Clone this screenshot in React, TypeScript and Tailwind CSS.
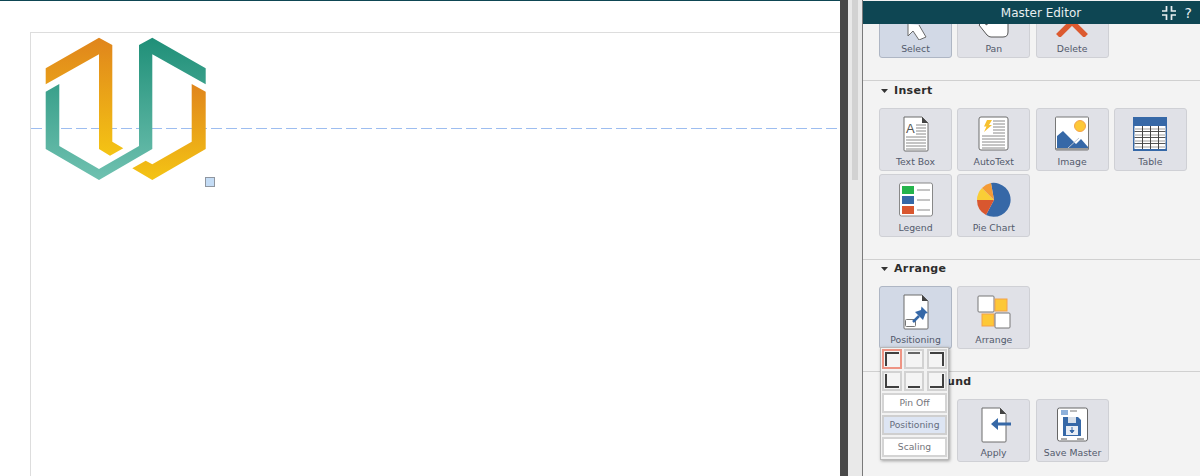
const font = "font-['DejaVu_Sans',Verdana,sans-serif]";

function Btn({ label, active, children }: { label: string; active?: boolean; children: React.ReactNode }) {
  return (
    <div
      className={`relative w-[73px] h-[63px] shrink-0 rounded-[3px] border flex flex-col items-center justify-end pb-[2px] ${
        active ? "bg-[#d2d9e6] border-[#aeb6c4]" : "bg-[#e0e1e7] border-[#cfd0d5]"
      }`}
    >
      <div className="flex-1 flex items-end justify-center pb-[3px]">{children}</div>
      <span className="text-[9.3px] leading-[13px] text-[#535a6c]">{label}</span>
    </div>
  );
}

function Doc({ w = 26, h = 36, children }: { w?: number; h?: number; children?: React.ReactNode }) {
  return (
    <svg width={w} height={h} viewBox={`0 0 ${w} ${h}`} className="overflow-visible">
      <path d={`M1 1H${w - 7}L${w - 1} 7V${h - 2}Q${w - 1} ${h - 1} ${w - 2} ${h - 1}H2Q1 ${h - 1} 1 ${h - 2}Z`} fill="#fff" stroke="#6d6d6d" />
      <path d={`M${w - 7} 1L${w - 1} 7H${w - 7}Z`} fill="#444" />
      {children}
    </svg>
  );
}

const Lines = ({ x, x2, ys }: { x: number; x2: number; ys: number[] }) => (
  <>
    {ys.map((y) => (
      <line key={y} x1={x} x2={x2} y1={y} y2={y} stroke="#8a8a8a" strokeWidth="1" />
    ))}
  </>
);

function SectionHead({ label }: { label: string }) {
  return (
    <div className="flex items-center h-[18px] pl-[18px] gap-[6px]">
      <svg width="7" height="4" viewBox="0 0 7 4"><path d="M0 0H7L3.5 4Z" fill="#333" /></svg>
      <span className="text-[11px] font-bold tracking-[0.35px] text-[#2c2c2c]">{label}</span>
    </div>
  );
}

function Logo() {
  return (
    <svg width="162" height="144" viewBox="45 37 162 144" className="block">
      <defs>
        <linearGradient id="or" x1="0" y1="0" x2="0" y2="1">
          <stop offset="0" stopColor="#e0851c" />
          <stop offset="1" stopColor="#f4c414" />
        </linearGradient>
        <linearGradient id="tl" x1="0" y1="0" x2="0" y2="1">
          <stop offset="0" stopColor="#1f8f78" />
          <stop offset="1" stopColor="#6fc1b0" />
        </linearGradient>
      </defs>
      <path d="M45.700 68.300L99 37.700L112.300 45V141.700L123.300 148.300L110 155.700L99 149V54.300L45.700 84.300Z" fill="url(#or)" />
      <path d="M45.700 91.700L59.300 84V146L99 169L139 146V45L152.300 37.700L205.700 68.300V84.300L152.300 54.300V149L99 180L45.700 149Z" fill="url(#tl)" />
      <path d="M191.700 84L205.700 91.700V149L152.300 180L132.300 168.300L145.700 160.700L152.300 164.300L191.700 141.700Z" fill="url(#or)" />
    </svg>
  );
}

function Pin({ active, d, lines, light }: { active?: boolean; d: string; lines: string; light?: boolean }) {
  return (
    <div className={`w-[20px] h-[20px] border-2 bg-[#f4f4f4] ${active ? "border-[#ee9484]" : "border-[#d2d2d2]"}`}>
      <svg width="16" height="16" viewBox="0 0 16 16" className="block">
        <path d={lines} stroke="#aaa" strokeDasharray="1 1" fill="none" />
        <path d={d} stroke={light ? "#666" : "#3f3f3f"} strokeWidth="2" fill="none" />
      </svg>
    </div>
  );
}

function PopBtn({ label, active }: { label: string; active?: boolean }) {
  return (
    <div className={`h-[20px] border-2 flex items-center justify-center text-[9.2px] ${active ? "bg-[#dde5f3] border-[#cfcfcf] text-[#666d7d]" : "bg-white border-[#d4d4d4] text-[#75757c]"}`}>
      {label}
    </div>
  );
}

export default function App() {
  return (
    <div className={`${font} w-[1200px] h-[476px] overflow-hidden flex bg-white`}>
      {/* Canvas */}
      <div className="w-[840px] h-full shrink-0 border-t border-[#0e4653] pt-[31px] pl-[30px]">
        <div className="relative h-[460px] border-l border-t border-[#dddddd]">
          <div className="absolute left-0 right-[2px] top-[95px] h-[1px] bg-[repeating-linear-gradient(90deg,#9dbdf0_0_11px,transparent_11px_15px)]" />
          <div className="absolute left-[14px] top-[4px]"><Logo /></div>
          <div className="absolute left-[174px] top-[144px] w-[10px] h-[10px] bg-[#c4dcf5] border border-[#8f96a0]" />
        </div>
      </div>
      {/* Splitter + scrollbar */}
      <div className="w-[8px] h-full shrink-0 bg-[#484848]" />
      <div className="w-[14px] h-full shrink-0 bg-[#e9e9e9] pl-[4px] pr-[4px]">
        <div className="h-[180px] bg-[#d2d2d2]" />
      </div>
      <div className="w-[1px] h-full shrink-0 bg-[#7a7a7a]" />
      {/* Panel */}
      <div className="flex-1 h-full relative bg-[#f3f3f3] flex flex-col overflow-hidden">
        <div className="relative z-10 h-[23px] mt-[1px] -mb-[1px] shrink-0 bg-[#0e4653] flex items-center justify-center text-[12px] text-[#e8eef0]">
          <span className="ml-[19px]">Master Editor</span>
          <div className="absolute right-[8px] top-0 h-full flex items-center gap-[9px]">
            <svg width="14" height="14" viewBox="0 0 14 14"><path d="M4.500 0V5H0M9.500 0V5H14M4.500 14V9H0M9.500 14V9H14" stroke="#e8eef0" strokeWidth="1.700" fill="none" /></svg>
            <span className="text-[14px] leading-none">?</span>
          </div>
        </div>

        {/* Tools, clipped at the top by the header */}
        <div className="h-[58px] shrink-0 overflow-hidden border-b border-[#d0d0d0] flex items-end pb-[22px] pl-[16px] gap-[5.3px]">
          <Btn label="Select" active>
            <svg width="20" height="16" viewBox="0 0 20 16" className="-mb-[1px] ml-[2px]"><path d="M1 0V12L6 7L12 16L19 13L12 1" fill="#fff" stroke="#6a6a6a" /></svg>
          </Btn>
          <Btn label="Pan">
            <svg width="32" height="18" viewBox="0 0 32 18" className="mb-[1px]"><path d="M1 5L4 2L9 5V0H30V12Q30 17 25 17H13Q11 17 9 15Z" fill="#fff" stroke="#555" /></svg>
          </Btn>
          <Btn label="Delete">
            <svg width="34" height="16" viewBox="0 0 34 16" className="mb-[2px]"><path d="M3 15L17 1L31 15" stroke="#dc5a30" strokeWidth="5.500" fill="none" /></svg>
          </Btn>
        </div>

        {/* Insert */}
        <div className="h-[179px] shrink-0 border-b border-[#d0d0d0] pt-[1px]">
          <SectionHead label="Insert" />
          <div className="pl-[16px] pt-[8px] flex flex-wrap gap-x-[5.3px] gap-y-[3px] w-[330px]">
            <Btn label="Text Box">
              <Doc>
                <text x="3" y="17" fontSize="13" fill="#555" fontFamily="Liberation Sans">A</text>
                <Lines x={13} x2={23} ys={[9, 12, 15, 18]} />
                <Lines x={3} x2={23} ys={[21, 24, 27, 30, 33]} />
              </Doc>
            </Btn>
            <Btn label="AutoText">
              <svg width="31" height="36" viewBox="0 0 31 36">
                <rect x="1" y="1" width="29" height="33" rx="2" fill="#fff" stroke="#6d6d6d" />
                <path d="M9 4H14L11 9H14L6 16L8.500 10.500H6Z" fill="#f7c12f" />
                <Lines x={15} x2={27} ys={[5, 8, 11, 14, 17]} />
                <Lines x={4} x2={27} ys={[20, 23, 26, 29, 32]} />
              </svg>
            </Btn>
            <Btn label="Image">
              <svg width="34" height="36" viewBox="0 0 34 36">
                <rect x="0.500" y="1" width="33" height="33" rx="1" fill="#fff" stroke="#777" />
                <rect x="1" y="32" width="32" height="2" fill="#999" />
                <circle cx="25" cy="10" r="5.500" fill="#fdc837" stroke="#f4a24a" />
                <path d="M2 20L8 15L21 28L26 23L33 31V32H2Z" fill="#3668a7" />
                <path d="M13 32L24 22" stroke="#b8c4d4" />
              </svg>
            </Btn>
            <Btn label="Table">
              <svg width="34" height="36" viewBox="0 0 34 36">
                <rect x="0" y="1" width="34" height="34" fill="#3668a7" />
                <rect x="1.500" y="10" width="31" height="23" fill="#fff" />
                {[12, 15, 18, 21, 24, 27, 30].map((y, i) => (
                  <rect key={y} x="1.500" y={y} width="31" height={i % 2 ? 1 : 2} fill={i % 2 ? "#555" : "#cfcfcf"} />
                ))}
                {[9, 17, 25].map((x) => (
                  <rect key={x} x={x} y="10" width="1" height="23" fill="#444" />
                ))}
              </svg>
            </Btn>
            <Btn label="Legend">
              <svg width="34" height="36" viewBox="0 0 34 36">
                <rect x="0.500" y="1" width="33" height="33" rx="2" fill="#fff" stroke="#888" />
                <rect x="3" y="4" width="12" height="8" fill="#25b44c" />
                <rect x="3" y="14" width="12" height="8" fill="#3668a7" />
                <rect x="3" y="24" width="12" height="8" fill="#d9572f" />
                <Lines x={18} x2={31} ys={[8, 18, 28]} />
              </svg>
            </Btn>
            <Btn label="Pie Chart">
              <svg width="36" height="36" viewBox="0 0 36 36">
                <path d="M18 18L15 1A17 17 0 1 1 10 33Z" fill="#3668a7" />
                <path d="M18 18L10 33A17 17 0 0 1 1 18Z" fill="#d9572f" />
                <path d="M18 18L1 18A17 17 0 0 1 6 6Z" fill="#f9cd36" />
                <path d="M18 18L6 6A17 17 0 0 1 15 1Z" fill="#f49a35" />
              </svg>
            </Btn>
          </div>
        </div>

        {/* Arrange */}
        <div className="h-[112px] shrink-0 border-b border-[#d0d0d0]">
          <SectionHead label="Arrange" />
          <div className="pl-[16px] pt-[8px] flex gap-[5.3px]">
            <Btn label="Positioning" active>
              <Doc>
                <rect x="2.500" y="25.500" width="10" height="7" rx="1" fill="#fff" stroke="#777" />
                <path d="M18.500 12.500L25 19L22.500 19.500L20 26L12 18L18 16Z" fill="#3668a7" />
                <path d="M16 22L10 28" stroke="#3668a7" strokeWidth="2.500" />
              </Doc>
            </Btn>
            <Btn label="Arrange">
              <svg width="34" height="36" viewBox="0 0 34 36">
                <rect x="1" y="2" width="16" height="16" rx="1" fill="#fff" stroke="#777" />
                <rect x="18" y="5" width="12" height="12" fill="#fdc837" stroke="#f4a24a" />
                <rect x="5" y="20" width="12" height="12" fill="#fdc837" stroke="#f4a24a" />
                <rect x="18" y="19" width="15" height="15" rx="1" fill="#fff" stroke="#777" />
              </svg>
            </Btn>
          </div>
        </div>

        {/* Background */}
        <div className="flex-1 relative pt-[1px]">
          <SectionHead label="Background" />
          <div className="pl-[94px] pt-[8px] flex gap-[6px]">
            <Btn label="Apply">
              <Doc>
                <path d="M30 15.500H17V11L10 17L17 23V18.500H30Z" fill="#3668a7" />
              </Doc>
            </Btn>
            <Btn label="Save Master">
              <svg width="31" height="36" viewBox="0 0 31 36">
                <rect x="0.500" y="1" width="30" height="33" rx="2" fill="#fff" stroke="#666" />
                <rect x="4" y="3" width="7" height="5" fill="#8fb1da" />
                <path d="M13 4H20" stroke="#777" />
                <path d="M6 10H21L24 13V29H6Z" fill="#3668a7" />
                <rect x="11" y="10" width="8" height="6" fill="#d7dfe9" />
                <rect x="9" y="19" width="12" height="9" fill="#e8edf4" />
                <path d="M15 20V24M13 23.500H17L15 26Z" stroke="#3668a7" fill="#3668a7" />
                <path d="M4 32H10M20 32H27" stroke="#555" />
              </svg>
            </Btn>
          </div>
        </div>

        {/* Positioning popup */}
        <div className="absolute left-[17px] top-[347px] w-[69px] h-[113px] z-20 bg-[#f2f2f2] border border-[#b8b8b8] shadow-[1px_1px_3px_rgba(0,0,0,0.35)] p-[1px] flex flex-col gap-[2px]">
          <div className="grid grid-cols-3 gap-[2px]">
            <Pin active d="M2 15V2H15" lines="5 5H14" />
            <Pin light d="M2 2H14" lines="4 6H12" />
            <Pin d="M1 2H14V15" lines="3 5H11" />
            <Pin d="M2 1V14H15" lines="5 11H14" />
            <Pin d="M2 14H14" lines="4 11H12" />
            <Pin d="M1 14H14V1" lines="3 11H11" />
          </div>
          <PopBtn label="Pin Off" />
          <PopBtn label="Positioning" active />
          <PopBtn label="Scaling" />
        </div>
      </div>
    </div>
  );
}
